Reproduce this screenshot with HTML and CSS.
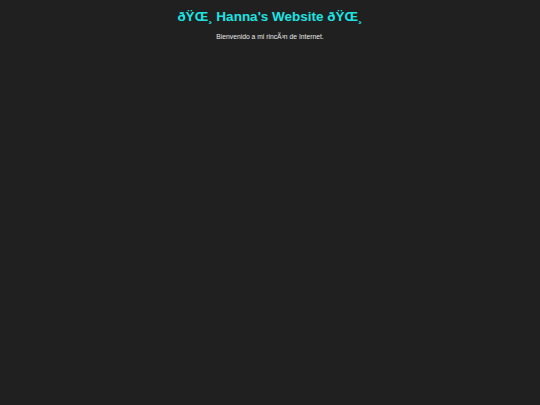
FILE: index.html
```html
<!DOCTYPE html>
<html>
<head>
<meta charset="utf-8">
<link rel="stylesheet" href="styles.css">
</head>
<body>
<header class="hero">
<h1 class="title">ðŸŒ¸ Hanna's Website ðŸŒ¸</h1>
<p class="tagline">Bienvenido a mi rincÃ³n de Internet.</p>
</header>
</body>
</html>
```
FILE: styles.css
```css
html, body {
  margin: 0;
  padding: 0;
  background: #202020;
  height: 100%;
}
body {
  font-family: "Liberation Sans", Arial, sans-serif;
  color: #e8e8e8;
}
.hero {
  display: flex;
  flex-direction: column;
  align-items: center;
  padding-top: 9px;
}
.title {
  margin: 0;
  font-size: 13.5px;
  font-weight: bold;
  color: #1ee3e3;
  line-height: 16px;
}
.tagline {
  margin: 8px 0 0;
  font-size: 6.75px;
  line-height: 8px;
  color: #e8e8e8;
}
```
